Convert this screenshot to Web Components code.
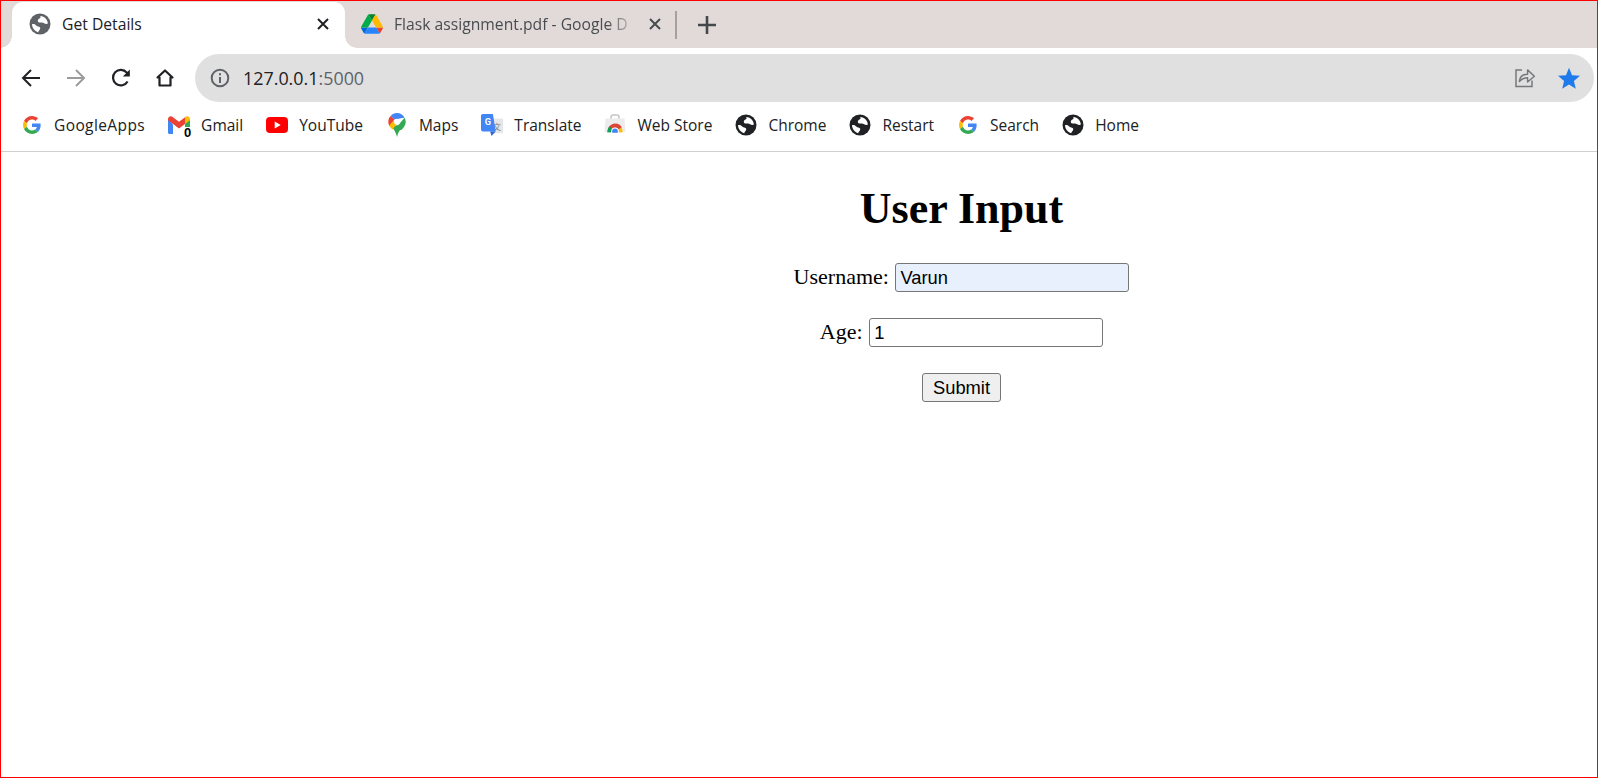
<!DOCTYPE html>
<html>
<head>
<meta charset="utf-8">
<title>Get Details</title>
<style>
html, body { margin: 0; height: 100%; background: #fff; }
</style>
</head>
<body>
<browser-window>
  <tab-strip>
    <browser-tab active title="Get Details" icon="globe"></browser-tab>
    <browser-tab title="Flask assignment.pdf - Google D" icon="drive"></browser-tab>
  </tab-strip>
  <nav-bar host="127.0.0.1" port=":5000"></nav-bar>
  <bookmark-bar>
    <bookmark-item icon="google" style="letter-spacing:.4px">GoogleApps</bookmark-item>
    <bookmark-item icon="gmail">Gmail</bookmark-item>
    <bookmark-item icon="youtube">YouTube</bookmark-item>
    <bookmark-item icon="maps">Maps</bookmark-item>
    <bookmark-item icon="translate">Translate</bookmark-item>
    <bookmark-item icon="store">Web Store</bookmark-item>
    <bookmark-item icon="darkglobe">Chrome</bookmark-item>
    <bookmark-item icon="darkglobe">Restart</bookmark-item>
    <bookmark-item icon="google">Search</bookmark-item>
    <bookmark-item icon="darkglobe">Home</bookmark-item>
  </bookmark-bar>
  <user-form></user-form>
</browser-window>

<script>
const globe = (color) => `<svg viewBox="0 0 22 22" width="22" height="22"><circle cx="11" cy="11" r="10.5" fill="${color}"/><path fill="#fff" d="M11 3c2.700 0 5.200 1.300 6.800 3.900.6 1.100 1 2.400 1.100 3.700-1.300.7-2.700.4-3.800-.4-1-.8-2.200-.7-3.400-.6-1.500.1-2.900-.4-2.900-1.900 0-1.400 1.500-2 2.400-2.700.6-.5.5-1.400-.2-2z"/><path fill="#fff" d="M3 11.300c1.500-.7 2.900 0 3.900 1 .9.900 2 1.100 3.200 1.500 1.200.4 1.400 1.500.9 2.500-.5.900-1.400 1.700-1.800 2.900-3.500-.8-6-4.100-6.200-7.900z"/></svg>`

const googleG = `<svg viewBox="0 0 48 48" width="18" height="18"><path fill="#EA4335" d="M24 9.500c3.540 0 6.710 1.220 9.210 3.600l6.850-6.850C35.900 2.380 30.470 0 24 0 14.620 0 6.510 5.380 2.560 13.220l7.980 6.190C12.430 13.720 17.740 9.500 24 9.500z"/><path fill="#4285F4" d="M46.980 24.550c0-1.570-.15-3.090-.38-4.550H24v9.020h12.940c-.58 2.960-2.260 5.480-4.780 7.180l7.730 6c4.510-4.180 7.090-10.360 7.090-17.650z"/><path fill="#FBBC05" d="M10.530 28.590c-.48-1.450-.76-2.990-.76-4.590s.27-3.140.76-4.590l-7.980-6.190C.92 16.460 0 20.120 0 24c0 3.880.92 7.540 2.560 10.780l7.970-6.190z"/><path fill="#34A853" d="M24 48c6.480 0 11.930-2.130 15.890-5.810l-7.730-6c-2.150 1.450-4.920 2.300-8.160 2.300-6.260 0-11.570-4.220-13.470-9.910l-7.980 6.190C6.510 42.620 14.620 48 24 48z"/></svg>`

const icons = {
  globe: globe('#5f6368'),
  darkglobe: globe('#202124'),
  google: googleG,
  drive: `<svg viewBox="0 0 87.300 78" width="22" height="20"><path fill="#0066da" d="m6.600 66.850 3.850 6.650c.8 1.400 1.950 2.500 3.300 3.300l13.750-23.800h-27.500c0 1.550.4 3.100 1.200 4.500z"/><path fill="#00ac47" d="m43.650 25-13.750-23.800c-1.350.8-2.500 1.900-3.300 3.300l-25.400 44a9.060 9.060 0 0 0 -1.200 4.500h27.500z"/><path fill="#ea4335" d="m73.550 76.800c1.350-.8 2.500-1.900 3.300-3.300l1.600-2.750 7.650-13.250c.8-1.400 1.200-2.950 1.200-4.500h-27.502l5.852 11.500z"/><path fill="#00832d" d="m43.650 25 13.750-23.800c-1.350-.8-2.900-1.200-4.500-1.200h-18.500c-1.600 0-3.150.45-4.500 1.200z"/><path fill="#2684fc" d="m59.800 53h-32.300l-13.750 23.800c1.350.8 2.900 1.200 4.500 1.200h50.800c1.600 0 3.150-.45 4.500-1.200z"/><path fill="#ffba00" d="m73.400 26.500-12.700-22c-.8-1.400-1.950-2.500-3.300-3.300l-13.750 23.800 16.150 28h27.450c0-1.550-.4-3.100-1.200-4.500z"/></svg>`,
  gmail: `<svg viewBox="0 0 22 18" width="22" height="18"><path fill="#4285f4" d="M0 3v13.500c0 .8.600 1.500 1.500 1.500H5V8.500z"/><path fill="#ea4335" d="M0 3.200C0 .8 2.700-.6 4.600.9L11 5.800 17.400.9c.3-.2.600-.4.900-.5V7L11 12.500 5 8 0 4.300z"/><path fill="#34a853" d="M17 7l5-3.500v13c0 .8-.6 1.500-1.500 1.500H17z"/><path fill="#fbbc04" d="M17 1.200 17.400.9C19.300-.6 22 .8 22 3.200v1L17 8z"/></svg>`,
  youtube: `<svg viewBox="0 0 22 16" width="22" height="16"><rect width="22" height="16" rx="4" fill="#f00"/><path fill="#fff" d="M8.700 4.500v7l6-3.500z"/></svg>`,
  maps: `<svg viewBox="0 0 18 24" width="18" height="24"><path fill="#34a853" d="M4.300 14.500c1.800 2.400 3.800 5 4.700 9.500.9-4.300 2.700-6.800 4.700-9.500L9 12z"/><path fill="#fbbc04" d="M1 12.500c.7 1 1.800 2.300 3.300 3.900l5.500-6.500L6 8 1.200 6z"/><path fill="#ea4335" d="M2.600 3.100C1.100 4.700.300 6.600.300 8.700c0 1.400.3 2.700.9 3.900l5.500-6.400z"/><path fill="#4285f4" d="M9 0C6.400 0 4.100 1.200 2.600 3.100l4.400 3.600 5.700-1.500 3.900-.5C15.100 1.900 12.300 0 9 0z"/><path fill="#34a853" d="M9.700 12.700l6.900-8c.7 1.200 1.100 2.600 1.100 4 0 2.300-.9 4-2 5.500l-1 1.300-1 1.200-4.700 1z"/><circle cx="9" cy="8.700" r="3" fill="#fff"/></svg>`,
  translate: `<svg viewBox="0 0 24 24" width="24" height="24"><rect x="10" y="5" width="14" height="16" fill="#e4e6e8"/><text x="17.200" y="17" font-size="9" fill="#7a7f86" text-anchor="middle" font-family="'Noto Sans CJK SC', sans-serif">文</text><path fill="#4285f4" d="M2 0h11l3 19H2c-1.100 0-2-.9-2-2V2C0 .9.900 0 2 0z"/><path fill="#3367d6" d="M10 19h6l-4.500 5z"/><text x="7.500" y="12.500" font-size="10" font-weight="700" fill="#fff" text-anchor="middle" font-family="Roboto, sans-serif">G</text></svg>`,
  store: `<svg viewBox="0 0 22 22" width="22" height="22"><path fill="none" stroke="#c4c4c4" stroke-width="1.500" d="M7 5V3c0-1 .8-2 2-2h4c1.200 0 2 1 2 2v2"/><path fill="#ececec" d="M1.500 4.500h19l1 13.500H.5z"/><path fill="#db4437" d="M3.500 18.500C3.500 13 7 9.500 11 9.500s6 2 6.800 3.800l-3 2.500c-.6-1.200-2-2.100-3.800-2.100-1.800 0-3 .9-3.700 2.400z"/><path fill="#fbbc04" d="M17.800 13.300c.5 1.500.7 3.200.7 5.200h-4c0-1 0-1.900-.3-2.700z"/><path fill="#0f9d58" d="M3.500 18.500h4.200c0-1 .1-1.600.6-2.400L5.700 12c-1.400 1.600-2.200 3.800-2.200 6.500z"/><circle cx="11" cy="17.400" r="3.800" fill="#fff"/><circle cx="11" cy="17.400" r="2.900" fill="#4285f4"/><rect y="18.800" x="0" width="22" height="3.200" fill="#fff"/></svg>`
}

const stripTemplate = document.createElement('template')
stripTemplate.innerHTML = `
<style>
:host {
  display: flex;
  align-items: flex-end;
  height: 47px;
  padding-left: 11px;
  background: #e2dad8;
  font-family: "Open Sans", "Noto Sans", sans-serif;
}
.divider {
  width: 2px;
  height: 28px;
  background: #a5a09e;
  align-self: center;
  margin-top: 1px;
}
.plus {
  margin: 0 0 0 21px;
  align-self: center;
  display: flex;
}
</style>
<slot></slot>
<div class="divider"></div>
<div class="plus">
  <svg viewBox="0 0 18 18" width="18" height="18"><path d="M9 0v18M0 9h18" stroke="#45484b" stroke-width="2.600" fill="none"/></svg>
</div>
`
customElements.define('tab-strip',
  /**
   * The row of tabs on top of the window.
   */
  class extends HTMLElement {
    constructor () {
      super()
      this.attachShadow({ mode: 'open' })
        .appendChild(stripTemplate.content.cloneNode(true))
    }
  }
)

const tabTemplate = document.createElement('template')
tabTemplate.innerHTML = `
<style>
:host {
  display: flex;
  align-items: center;
  position: relative;
  box-sizing: border-box;
  width: 330px;
  height: 46px;
  padding: 0 14px 2px 16px;
  font-size: 15.7px;
  color: #484c50;
}
:host([active]) {
  width: 333px;
  padding: 0 16px 2px 17px;
  color: #202124;
  background: #fff;
  border-radius: 11px 11px 0 0;
}
:host([active])::before, :host([active])::after {
  content: "";
  position: absolute;
  bottom: 0;
  width: 12px;
  height: 12px;
}
:host([active])::before {
  right: 100%;
  background: radial-gradient(circle at 0 0, transparent 11.5px, #fff 12px);
}
:host([active])::after {
  left: 100%;
  background: radial-gradient(circle at 100% 0, transparent 11.5px, #fff 12px);
}
.icon { display: flex; width: 22px; justify-content: center; flex: none; }
.title {
  flex: 1;
  margin-left: 11px;
  white-space: nowrap;
  -webkit-mask-image: linear-gradient(to left, transparent, #000 30px);
  mask-image: linear-gradient(to left, transparent, #000 30px);
}
:host([active]) .title { -webkit-mask-image: none; mask-image: none; }
.close { display: flex; margin-left: 12px; }
</style>
<span class="icon"></span>
<span class="title"></span>
<span class="close">
  <svg viewBox="0 0 12 12" width="12" height="12"><path d="M1 1l10 10M11 1L1 11" fill="none" stroke="currentColor" stroke-width="2"/></svg>
</span>
`
customElements.define('browser-tab',
  /**
   * One tab, reads title and icon from its attributes.
   */
  class extends HTMLElement {
    constructor () {
      super()
      this.attachShadow({ mode: 'open' })
        .appendChild(tabTemplate.content.cloneNode(true))
    }

    connectedCallback () {
      this.shadowRoot.querySelector('.title').textContent = this.getAttribute('title')
      this.shadowRoot.querySelector('.icon').innerHTML = icons[this.getAttribute('icon')]
      this.removeAttribute('title')
    }
  }
)

const navTemplate = document.createElement('template')
navTemplate.innerHTML = `
<style>
:host {
  display: flex;
  align-items: center;
  height: 54px;
  padding: 6px 3px 0 0;
  box-sizing: border-box;
  font-family: "Open Sans", "Noto Sans", sans-serif;
}
.buttons { display: flex; align-items: center; padding-left: 19px; gap: 23px; width: 175px; box-sizing: border-box; margin-right: 19px; }
.buttons svg { display: block; }
.buttons svg:last-child { margin-left: -1px; }
.omni {
  flex: 1;
  display: flex;
  align-items: center;
  height: 48px;
  border-radius: 24px;
  background: #e0e0e0;
  padding: 0 14px 0 15px;
}
.url { margin-left: 13px; font-size: 17.9px; color: #202124; flex: 1; }
.url span { color: #5f6368; }
.share { margin-right: 22px; }
svg { flex: none; }
</style>
<div class="buttons">
  <svg viewBox="0 0 22 22" width="22" height="22"><path d="M20 11H3M11 3l-8 8 8 8" fill="none" stroke="#202124" stroke-width="2"/></svg>
  <svg viewBox="0 0 22 22" width="22" height="22"><path d="M2 11h17M11 3l8 8-8 8" fill="none" stroke="#9c9c9c" stroke-width="2"/></svg>
  <svg viewBox="0 0 22 22" width="22" height="22"><path d="M17.600 14.500A7.800 7.800 0 1 1 16.800 5.600L19 8" fill="none" stroke="#202124" stroke-width="2.200"/><path d="M19.800 2.500v7h-7z" fill="#202124"/></svg>
  <svg viewBox="0 0 22 22" width="22" height="22"><path d="M11 3.500l7.500 7H16.500V18.500h-11v-8H3.500z" fill="none" stroke="#202124" stroke-width="2.200" stroke-linejoin="round"/></svg>
</div>
<div class="omni">
  <svg viewBox="0 0 20 20" width="20" height="20"><circle cx="10" cy="10" r="8.300" fill="none" stroke="#5f6368" stroke-width="2"/><path d="M9 9h2v6H9zM9 5.200h2v2H9z" fill="#5f6368"/></svg>
  <div class="url"><span id="host" style="color:#202124"></span><span id="port"></span></div>
  <svg class="share" viewBox="0 0 22 22" width="22" height="22"><path d="M8 3.500H2V20h16v-6" fill="none" stroke="#75787b" stroke-width="1.500" transform="translate(0 -.5)"/><path d="M6 15.500c.5-4.500 3.500-7.500 8.500-7.500V3.500l7 6.500-7 6v-4.500c-3.500 0-6 1-8.500 4z" fill="#e0e0e0" stroke="#75787b" stroke-width="1.500" stroke-linejoin="round" transform="translate(-.5 -.5) scale(.97)"/></svg>
  <svg viewBox="0 0 22 22" width="22" height="22"><path d="M11 .8l3 7.400 8 .6-6.100 5.200 1.900 7.800L11 17.600l-6.800 4.200 1.900-7.800L0 8.800l8-.6z" fill="#1f7aec"/></svg>
</div>
`
customElements.define('nav-bar',
  /**
   * Back, forward, reload, home and the address box.
   */
  class extends HTMLElement {
    constructor () {
      super()
      this.attachShadow({ mode: 'open' })
        .appendChild(navTemplate.content.cloneNode(true))
    }

    connectedCallback () {
      this.shadowRoot.querySelector('#host').textContent = this.getAttribute('host')
      this.shadowRoot.querySelector('#port').textContent = this.getAttribute('port')
    }
  }
)

const barTemplate = document.createElement('template')
barTemplate.innerHTML = `
<style>
:host {
  display: flex;
  align-items: center;
  gap: 23px;
  height: 50px;
  box-sizing: border-box;
  padding: 0 0 3px 20px;
  border-bottom: 1px solid #d0d0d0;
  font-family: "Open Sans", "Noto Sans", sans-serif;
}
</style>
<slot></slot>
`
customElements.define('bookmark-bar',
  /**
   * The row of bookmarks.
   */
  class extends HTMLElement {
    constructor () {
      super()
      this.attachShadow({ mode: 'open' })
        .appendChild(barTemplate.content.cloneNode(true))
    }
  }
)

const itemTemplate = document.createElement('template')
itemTemplate.innerHTML = `
<style>
:host {
  display: flex;
  align-items: center;
  gap: 11px;
  font-size: 15.5px;
  color: #202124;
  white-space: nowrap;
}
.icon { position: relative; display: flex; justify-content: center; align-items: center; width: 22px; height: 24px; }
.badge {
  position: absolute;
  right: -2px;
  bottom: -1px;
  font: 700 13px/11px "Liberation Sans", sans-serif;
  letter-spacing: 0;
  background: #fff;
  color: #000;
  padding: 0 1px;
}
</style>
<span class="icon"></span>
<slot></slot>
`
customElements.define('bookmark-item',
  /**
   * One bookmark: icon plus the slotted label.
   */
  class extends HTMLElement {
    constructor () {
      super()
      this.attachShadow({ mode: 'open' })
        .appendChild(itemTemplate.content.cloneNode(true))
    }

    connectedCallback () {
      const name = this.getAttribute('icon')
      const box = this.shadowRoot.querySelector('.icon')
      box.innerHTML = icons[name]
      if (name === 'gmail') {
        const badge = document.createElement('span')
        badge.className = 'badge'
        badge.textContent = '0'
        box.appendChild(badge)
      }
    }
  }
)

const formTemplate = document.createElement('template')
formTemplate.innerHTML = `
<style>
:host {
  display: block;
  padding-left: 325px;
  text-align: center;
  font: 22px "Liberation Serif", "Times New Roman", serif;
  color: #000;
}
h1 { font-size: 44px; margin: 30.5px 0 29.5px; }
p { margin: 26px 0; }
input, button {
  font: 18.33px "Liberation Sans", Arial, sans-serif;
  color: #000;
  box-sizing: border-box;
  height: 29px;
  border: 1px solid #767676;
  border-radius: 3px;
}
input { width: 234px; margin-left: 1px; padding: 1px 4px; background: #fff; outline: none; }
input.filled { background: #e8f0fe; }
button { width: 79px; padding: 0; background: #efefef; }
</style>
<form id="details">
  <h1>User Input</h1>
  <p>Username: <input class="filled" type="text" value="Varun"></p>
  <p>Age: <input type="text" value="1"></p>
  <p><button type="submit">Submit</button></p>
</form>
`
customElements.define('user-form',
  /**
   * The form served by the page itself.
   */
  class extends HTMLElement {
    constructor () {
      super()
      this.attachShadow({ mode: 'open' })
        .appendChild(formTemplate.content.cloneNode(true))
      this.shadowRoot.querySelector('#details').addEventListener('submit', (event) => {
        event.preventDefault()
      })
    }
  }
)

const windowTemplate = document.createElement('template')
windowTemplate.innerHTML = `
<style>
:host {
  display: block;
  box-sizing: border-box;
  height: 778px;
  border: 1px solid #f00;
  background: #fff;
  overflow: hidden;
}
</style>
<slot></slot>
`
customElements.define('browser-window',
  /**
   * The red outlined frame around everything.
   */
  class extends HTMLElement {
    constructor () {
      super()
      this.attachShadow({ mode: 'open' })
        .appendChild(windowTemplate.content.cloneNode(true))
    }
  }
)
</script>
</body>
</html>
